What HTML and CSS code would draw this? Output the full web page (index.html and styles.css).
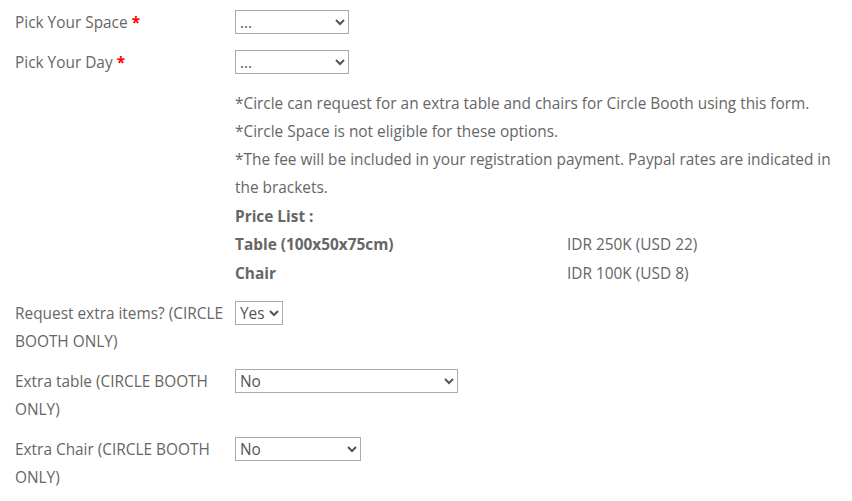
FILE: index.html
```html
<!DOCTYPE html>
<html>
<head>
<meta charset="utf-8">
<link rel="stylesheet" href="styles.css">
</head>
<body>
<form class="form">
  <div class="row">
    <label class="label">Pick Your Space <span class="req">*</span></label>
    <div class="control"><select class="sel sel-space"><option>...</option></select></div>
  </div>
  <div class="row">
    <label class="label">Pick Your Day <span class="req">*</span></label>
    <div class="control"><select class="sel sel-space"><option>...</option></select></div>
  </div>
  <div class="row">
    <div class="label"></div>
    <div class="control info">
      <p>*Circle can request for an extra table and chairs for Circle Booth using this form.</p>
      <p>*Circle Space is not eligible for these options.</p>
      <p>*The fee will be included in your registration payment. Paypal rates are indicated in the brackets.</p>
      <p class="bold">Price List :</p>
      <table class="prices">
        <tr><td class="item">Table (100x50x75cm)</td><td>IDR 250K (USD 22)</td></tr>
        <tr><td class="item">Chair</td><td>IDR 100K (USD 8)</td></tr>
      </table>
    </div>
  </div>
  <div class="row">
    <label class="label">Request extra items? (CIRCLE BOOTH ONLY)</label>
    <div class="control"><select class="sel sel-yes"><option>Yes</option><option>No</option></select></div>
  </div>
  <div class="row">
    <label class="label">Extra table (CIRCLE BOOTH ONLY)</label>
    <div class="control"><select class="sel sel-table"><option>No</option></select></div>
  </div>
  <div class="row">
    <label class="label">Extra Chair (CIRCLE BOOTH ONLY)</label>
    <div class="control"><select class="sel sel-chair"><option>No</option></select></div>
  </div>
</form>
</body>
</html>
```
FILE: styles.css
```css
html, body {
  margin: 0;
  padding: 0;
  background: #fff;
}
body {
  font-family: "Open Sans", "Liberation Sans", sans-serif;
  font-size: 15.4px;
  line-height: 28px;
  color: #666;
}
.form {
  display: flex;
  flex-direction: column;
  gap: 12px;
  padding: 9px 12px 0 15px;
}
.row {
  display: flex;
  align-items: flex-start;
}
.label {
  width: 220px;
  flex: none;
}
.req {
  color: #f00;
  font-weight: 700;
}
.control {
  flex: 1;
  min-height: 28px;
  display: flex;
  flex-direction: column;
  align-items: flex-start;
}
.info { padding-top: 1px; }
.info p {
  margin: 0;
}
.info .bold {
  font-weight: 700;
  margin-top: 1px;
}
.prices {
  border-collapse: collapse;
  margin: 0;
}
.prices td {
  padding: 0;
  height: 28.5px;
  line-height: 28px;
  vertical-align: middle;
}
.prices .item {
  width: 332px;
  font-weight: 700;
}
.sel {
  margin-top: 1px;
  height: 24px;
  font-family: "Open Sans", "Liberation Sans", sans-serif;
  font-size: 15.4px;
  color: #555;
  background: #fff;
  border: 1px solid #aaa;
  border-radius: 0;
  padding: 0;
}
.sel-space { width: 114px; }
.sel-yes { width: 48px; }
.sel-table { width: 223px; }
.sel-chair { width: 126px; }
```
